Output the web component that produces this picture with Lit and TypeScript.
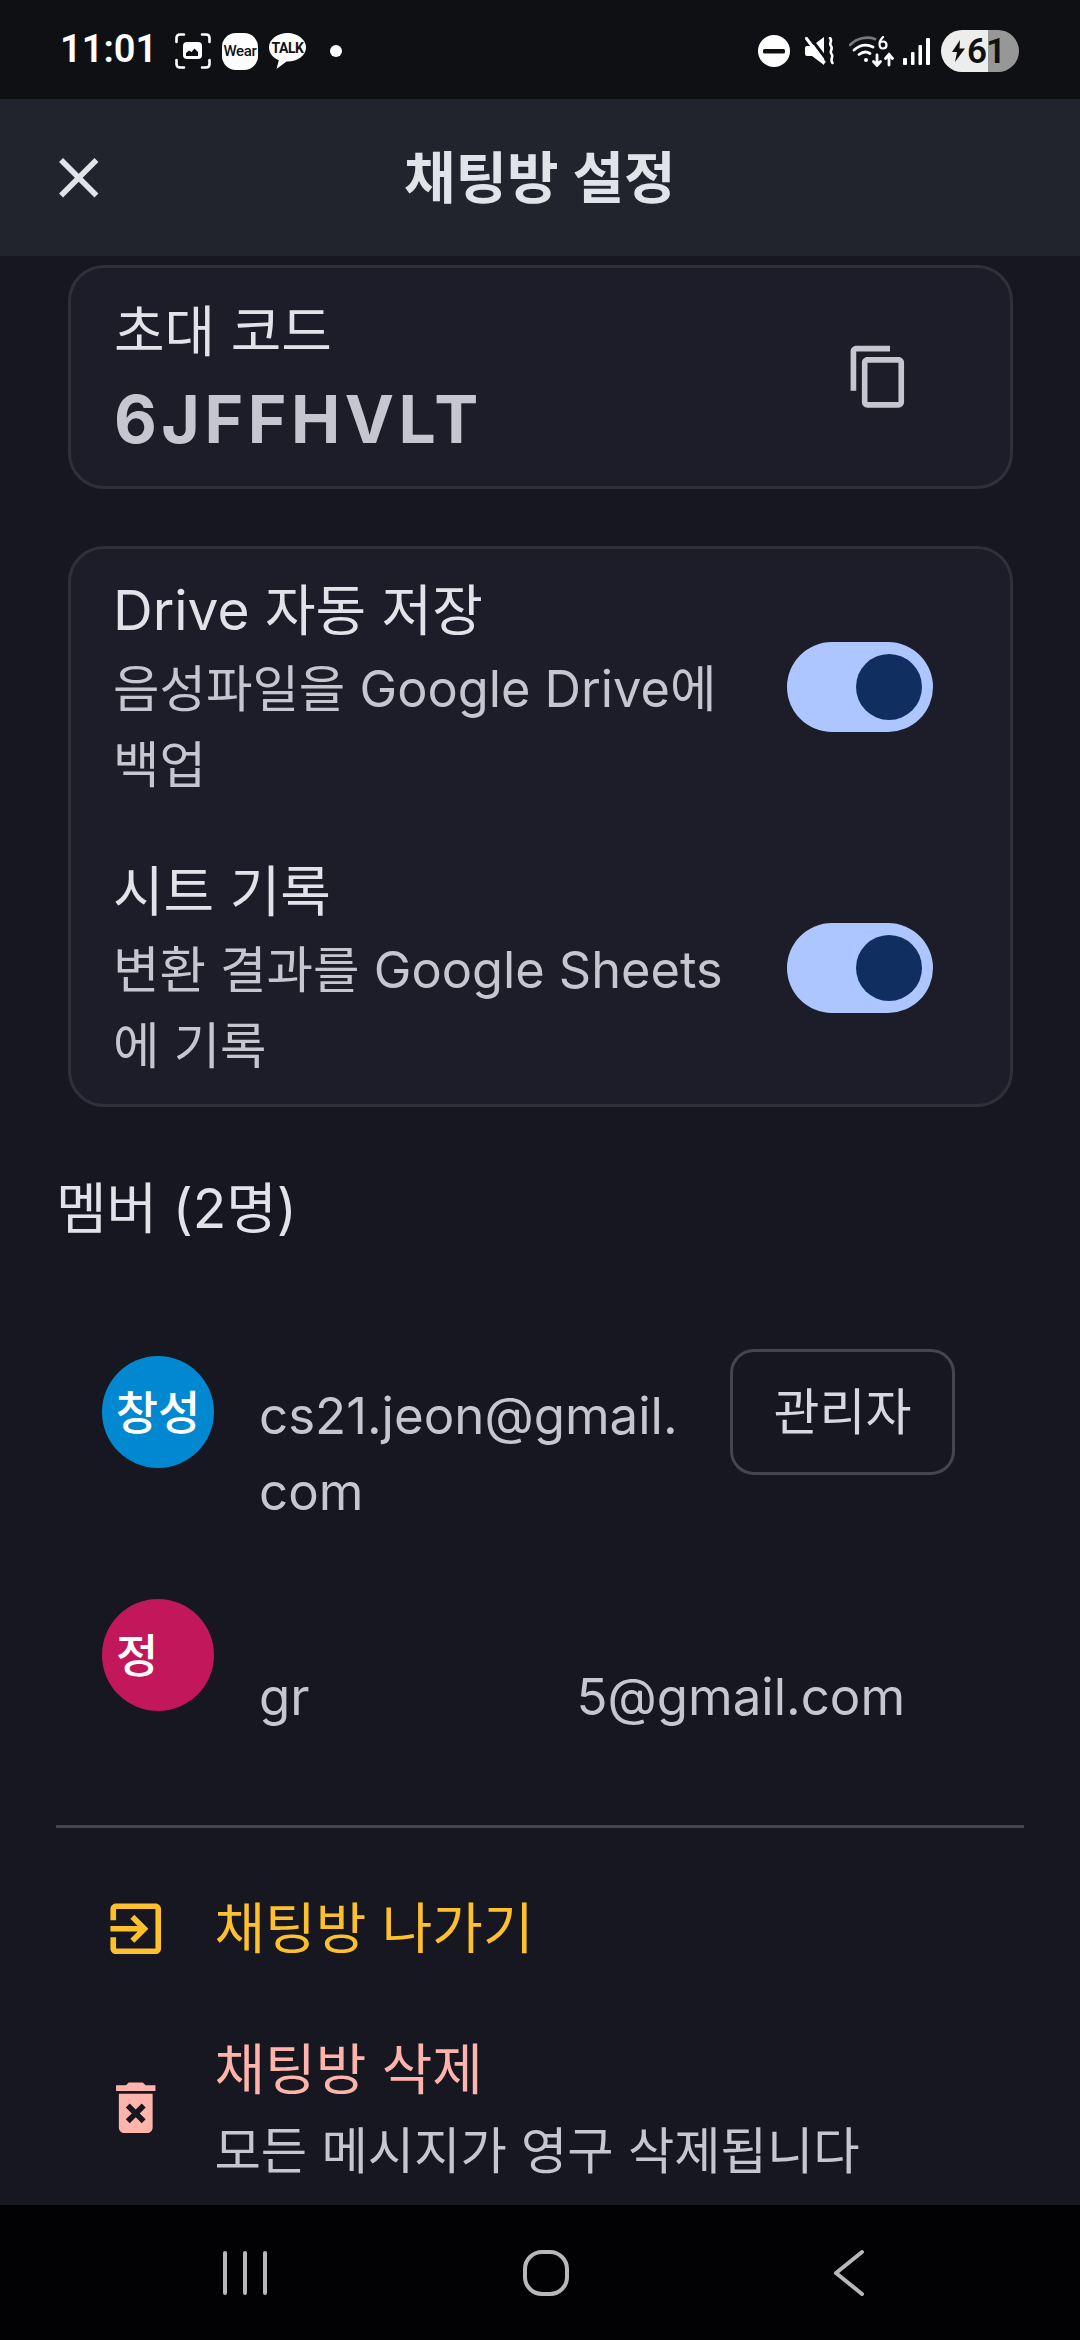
import { LitElement, html, css } from 'lit';
import { customElement } from 'lit/decorators.js';

const M_CLOSE = 'M19 6.41 17.59 5 12 10.59 6.41 5 5 6.41 10.59 12 5 17.59 6.41 19 12 13.41 17.59 19 19 17.59 13.41 12z';
const M_COPY = 'M16 1H4c-1.1 0-2 .9-2 2v14h2V3h12V1zm3 4H8c-1.1 0-2 .9-2 2v14c0 1.1.9 2 2 2h11c1.1 0 2-.9 2-2V7c0-1.1-.9-2-2-2zm0 16H8V7h11v14z';
const M_EXIT = 'M10.09 15.59 11.5 17l5-5-5-5-1.41 1.41L12.67 11H3v2h9.67l-2.58 2.59zM19 3H5c-1.11 0-2 .9-2 2v4h2V5h14v14H5v-4H3v4c0 1.1.89 2 2 2h14c1.1 0 2-.9 2-2V5c0-1.1-.9-2-2-2z';
const M_DELETE = 'M6 19c0 1.1.9 2 2 2h8c1.1 0 2-.9 2-2V7H6v12zm2.46-7.12 1.41-1.41L12 12.59l2.12-2.12 1.41 1.41L13.41 14l2.12 2.12-1.41 1.41L12 15.41l-2.12 2.12-1.41-1.41L10.59 14l-2.13-2.12zM15.5 4l-1-1h-5l-1 1H5v2h14V4z';

const icon = (d: string) => html`<svg class="icon" viewBox="0 0 24 24"><path d=${d} fill="currentColor"></path></svg>`;

@customElement('app-root')
export class AppRoot extends LitElement {
  static styles = css`
    :host {
      display: block;
      width: 1080px;
      height: 2340px;
      overflow: hidden;
      font-family: Inter, 'Noto Sans CJK KR', sans-serif;
      background: #161720;
      color: #c5c6d0;
    }
    .page { display: flex; flex-direction: column; height: 2340px; }
    .icon { width: 67.5px; height: 67.5px; display: block; flex: none; }

    .status {
      height: 99px; flex: none; background: #0f1014; color: #fff;
      display: flex; align-items: center; justify-content: space-between;
      padding: 3px 61px 0 60px; box-sizing: border-box;
    }
    .status-left, .status-right { display: flex; align-items: center; }
    .time { font: 600 38px Roboto, sans-serif; width: 115px; margin-top: -5px; }
    .status svg { display: block; flex: none; }
    .wear {
      width: 36px; height: 37px; border-radius: 14px; background: #fff; color: #111;
      font: 500 15px Roboto, sans-serif; letter-spacing: -0.3px;
      display: flex; align-items: center; justify-content: center;
      margin-left: 11px;
    }
    .battery {
      width: 78px; height: 42px; border-radius: 21px; position: relative; overflow: hidden;
      background: linear-gradient(90deg, #ededed 0 60%, #979797 60%);
      color: #111; display: flex; align-items: center; justify-content: flex-end;
      font: 600 35px Roboto, sans-serif; letter-spacing: -1px; padding-right: 14px; box-sizing: border-box; margin-left: 11px;
    }
    .bolt { position: absolute; left: 11px; top: 10px; }

    .appbar {
      height: 157px; flex: none; background: #21242c; color: #e2e2e9;
      display: flex; align-items: center; padding-left: 45px;
    }
    .appbar-title {
      flex: 1; text-align: center; font-size: 56px; font-weight: 600;
      padding: 0 113px 8px 0;
    }

    .scroll { flex: 1; overflow: hidden; padding: 9px 56px 0 56px; }
    .card {
      background: #1c1d28; border: 3px solid #2f3039; border-radius: 36px;
      margin: 0 11px 0 12px; box-sizing: border-box;
    }
    .code-card {
      height: 224px; display: flex; align-items: center; justify-content: space-between;
      padding: 0 98px 0 43px; margin-bottom: 57px;
    }
    .code-text { padding-top: 6px; }
    .code-label { font-size: 55px; line-height: 60px; color: #e2e2e9; }
    .code-value { font-size: 66px; line-height: 80px; font-weight: 700; letter-spacing: 4.5px; margin-top: 18px; }
    .settings-card { height: 561px; padding: 25px 77px 0 42px; }
    .setting { display: flex; align-items: flex-start; justify-content: space-between; height: 281px; }
    .setting-title { font-size: 55px; line-height: 72px; color: #e2e2e9; }
    .setting-sub { font-size: 50.5px; line-height: 76px; width: 640px; margin-top: 5px; }
    .switch {
      width: 146px; height: 90px; border-radius: 45px; background: #adc6ff; position: relative; margin-top: 68px; flex: none;
    }
    .switch i {
      position: absolute; right: 11px; top: 12px; width: 66px; height: 66px; border-radius: 50%; background: #102f60;
    }

    .members-title { font-size: 55px; line-height: 70px; color: #e2e2e9; margin-top: 66px; }
    .member { display: flex; align-items: flex-start; padding-left: 46px; }
    .avatar {
      width: 112px; height: 112px; border-radius: 50%; flex: none; color: #fff;
      display: flex; align-items: center; justify-content: center;
      font-size: 46px; font-weight: 500; margin-right: 45px; padding-bottom: 6px; box-sizing: border-box;
    }
    .email { font-size: 51px; line-height: 76px; color: #c5c6d0; }
    .member-a { margin-top: 113px; height: 243px; }
    .member-a .avatar { background: #0288d1; }
    .member-a .email { width: 440px; padding-top: 22px; margin-right: 31px; }
    .badge {
      width: 225px; height: 126px; border: 3px solid #44464f; border-radius: 24px; box-sizing: border-box;
      display: flex; align-items: center; justify-content: center; font-size: 50px; color: #d8d9e0;
      margin-top: -7px; padding-bottom: 8px;
    }
    .member-b { height: 226px; }
    .member-b .avatar { background: #c2185b; justify-content: flex-start; padding-left: 14px; }
    .member-b .email { padding-top: 60px; display: flex; }
    .member-b .gap { width: 267px; }
    hr { border: 0; height: 3px; background: #44464f; margin: 0; }

    .action { display: flex; align-items: center; padding-left: 46px; }
    .action .icon { margin-right: 45px; }
    .leave { color: #ffc02e; height: 201px; }
    .leave-text { font-size: 55px; padding-bottom: 10px; }
    .delete { color: #ffb4ab; height: 158px; }
    .delete-text { padding-top: 3px; }
    .delete-title { font-size: 55px; line-height: 76px; }
    .delete-sub { font-size: 50.4px; line-height: 76px; margin-top: 6px; color: #c5c6d0; }

    .nav {
      height: 135px; flex: none; background: #020204; color: #b8b8b8;
      display: flex; align-items: center; padding-left: 222px;
    }
    .nav svg { display: block; fill: none; stroke: currentColor; stroke-width: 4; stroke-linecap: round; stroke-linejoin: round; }
    .nav .home { margin-left: 253px; }
    .nav .back { margin-left: 261px; }
    .ml15 { margin-left: 15px; }
    .ml9 { margin-left: 9px; }
    .ml11 { margin-left: 11px; }
    .ml24 { margin-left: 24px; }
  `;

  private renderSwitch() {
    return html`<div class="switch"><i></i></div>`;
  }

  private renderStatusLeft() {
    return html`
      <div class="status-left">
        <span class="time">11:01</span>
        <svg width="36" height="36" viewBox="0 0 36 36" fill="none" stroke="#fff" stroke-width="2.6" stroke-linecap="round">
          <path d="M1.500 9V5q0-3.500 3.500-3.500h4M27 1.500h4q3.500 0 3.500 3.500v4M34.500 27v4q0 3.500-3.500 3.500h-4M9 34.500H5q-3.500 0-3.500-3.500v-4"></path>
          <rect x="8" y="9" width="19" height="17" rx="4" fill="#fff" stroke="none"></rect>
          <path d="M11 23v-3l3-2.500 2.500 1.500 3-3.500 3.500 3.500v4z" fill="#0f1014" stroke="none"></path>
        </svg>
        <div class="wear">Wear</div>
        <svg class="ml11" width="37" height="36" viewBox="0 0 37 36"><path d="M18.500 0C8.300 0 0 6.500 0 14.500c0 5.600 4 10.400 9.800 12.800L7.500 36l10-7.500h1C28.700 28.500 37 22.500 37 14.500S28.700 0 18.500 0z" fill="#fff"></path><text x="18.500" y="19.500" text-anchor="middle" font-size="14" font-weight="700" letter-spacing="-0.5" font-family="Roboto, sans-serif" fill="#111">TALK</text></svg>
        <svg class="ml24" width="12" height="12" viewBox="0 0 12 12"><circle cx="6" cy="6" r="6" fill="#fff"></circle></svg>
      </div>`;
  }

  private renderStatusRight() {
    return html`
      <div class="status-right">
        <svg width="32" height="32" viewBox="0 0 32 32"><circle cx="16" cy="16" r="16" fill="#fff"></circle><rect x="5" y="14" width="22" height="4.500" rx="1.500" fill="#0f1014"></rect></svg>
        <svg class="ml15" width="29" height="28" viewBox="0 0 29 28" fill="#fff">
          <path d="M0 11q0-2 2-2h5L19 0v28L7 19H2q-2 0-2-2z"></path>
          <path d="M4-1 22 23" stroke="#0f1014" stroke-width="3"></path>
          <path d="M1.500 1.500 19 25" stroke="#fff" stroke-width="3" stroke-linecap="round"></path>
          <path d="M25 1c3 3-1.500 5 1 8s-2 5 .5 8-2 5 1 9" fill="none" stroke="#fff" stroke-width="2.600" stroke-linecap="round"></path>
        </svg>
        <svg class="ml15" width="45" height="31" viewBox="0 0 45 31" fill="none" stroke="#fff" stroke-width="2.800" stroke-linecap="round">
          <path d="M1 9C8 2 18 0 26 3" stroke="#777"></path>
          <path d="M5 14c6-5 13-6 19-3"></path>
          <path d="M10 18.500c4-3 8-3 11-1"></path>
          <circle cx="17" cy="24" r="2" fill="#fff" stroke="none"></circle>
          <path d="M28 19v10M24.500 25.500l3.500 4 3.500-4M40 29V19M36.500 22.500l3.500-4 3.500 4"></path>
          <path d="M34 1c-2 2-3.500 4-3.500 7 0 3 1.500 4.500 3.500 4.500s3.500-1.500 3.500-3.500-1.500-3.500-3.500-3.500-3 1-3.500 2" stroke-width="2.200"></path>
        </svg>
        <svg class="ml9" width="27" height="27" viewBox="0 0 27 27" fill="#fff"><rect x="0" y="20" width="4" height="7" rx="1"></rect><rect x="8" y="14" width="3.500" height="13" rx="1"></rect><rect x="15.500" y="7" width="3.500" height="20" rx="1"></rect><rect x="23" y="0" width="4" height="27" rx="1"></rect></svg>
        <div class="battery">
          <svg class="bolt" width="13" height="22" viewBox="0 0 13 22" fill="#111"><path d="M8 0 0 12h5L3 22l10-13.500H7.500z"></path></svg>
          61
        </div>
      </div>`;
  }

  render() {
    return html`
      <div class="page">
        <div class="status">
          ${this.renderStatusLeft()}
          ${this.renderStatusRight()}
        </div>

        <div class="appbar">
          ${icon(M_CLOSE)}
          <div class="appbar-title">채팅방 설정</div>
        </div>

        <div class="scroll">
          <div class="card code-card">
            <div class="code-text">
              <div class="code-label">초대 코드</div>
              <div class="code-value">6JFFHVLT</div>
            </div>
            ${icon(M_COPY)}
          </div>

          <div class="card settings-card">
            <div class="setting">
              <div>
                <div class="setting-title">Drive 자동 저장</div>
                <div class="setting-sub">음성파일을 Google Drive에 백업</div>
              </div>
              ${this.renderSwitch()}
            </div>
            <div class="setting">
              <div>
                <div class="setting-title">시트 기록</div>
                <div class="setting-sub">변환 결과를 Google Sheets 에 기록</div>
              </div>
              ${this.renderSwitch()}
            </div>
          </div>

          <div class="members-title">멤버 (2명)</div>

          <div class="member member-a">
            <div class="avatar">창성</div>
            <div class="email">cs21.jeon@gmail.<wbr />com</div>
            <div class="badge">관리자</div>
          </div>
          <div class="member member-b">
            <div class="avatar">정</div>
            <div class="email"><span>gr</span><span class="gap"></span><span>5@gmail.com</span></div>
          </div>
          <hr />

          <div class="action leave">
            ${icon(M_EXIT)}
            <div class="leave-text">채팅방 나가기</div>
          </div>
          <div class="action delete">
            ${icon(M_DELETE)}
            <div class="delete-text">
              <div class="delete-title">채팅방 삭제</div>
              <div class="delete-sub">모든 메시지가 영구 삭제됩니다</div>
            </div>
          </div>
        </div>

        <div class="nav">
          <svg width="46" height="46" viewBox="0 0 46 46"><path d="M3 3v40M23 3v40M43 3v40"></path></svg>
          <svg class="home" width="50" height="50" viewBox="0 0 50 50"><rect x="4" y="4" width="42" height="42" rx="17"></rect></svg>
          <svg class="back" width="34" height="50" viewBox="0 0 34 50"><path d="M30 4 4 25l26 21"></path></svg>
        </div>
      </div>
    `;
  }
}
